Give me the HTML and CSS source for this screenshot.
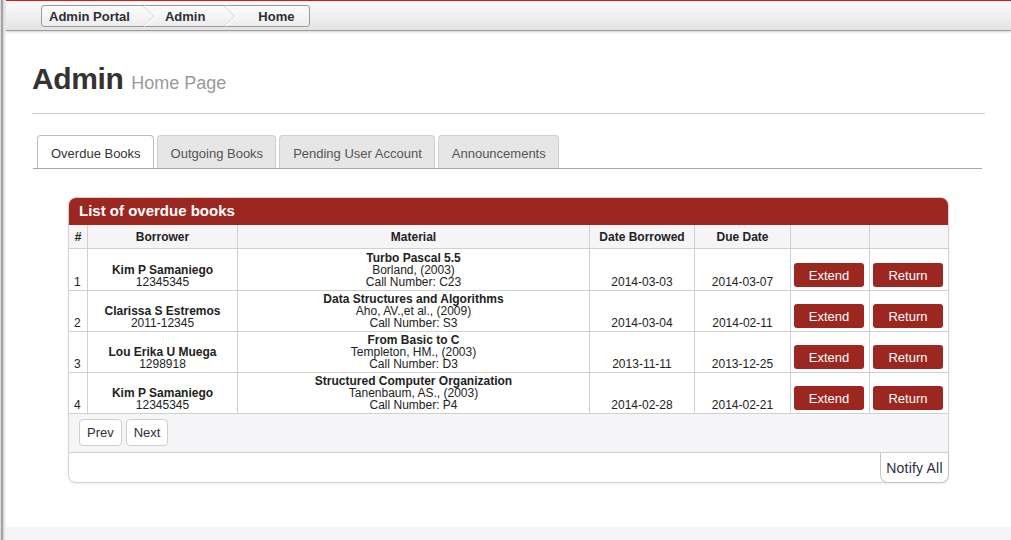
FILE: index.html
```html
<!DOCTYPE html>
<html>
<head>
<meta charset="utf-8">
<title>Admin Home Page</title>
<link rel="stylesheet" href="styles.css">
</head>
<body>
<div class="shell">
  <div class="edge"></div>
  <div class="main">
    <div class="toolbar">
      <nav class="crumbs">
        <span class="crumb c1">Admin Portal</span>
        <svg class="chev" width="14" height="22" viewBox="0 0 14 22"><polyline points="1,1 12,11 1,21" fill="none" stroke="#fdfdfd" stroke-width="2"/><polyline points="0,1 11,11 0,21" fill="none" stroke="#d2d2d2" stroke-width="1"/></svg>
        <span class="crumb c2">Admin</span>
        <svg class="chev" width="14" height="22" viewBox="0 0 14 22"><polyline points="1,1 12,11 1,21" fill="none" stroke="#fdfdfd" stroke-width="2"/><polyline points="0,1 11,11 0,21" fill="none" stroke="#d2d2d2" stroke-width="1"/></svg>
        <span class="crumb c3">Home</span>
      </nav>
    </div>
    <div class="content">
      <div class="page-header">
        <h1>Admin <small>Home Page</small></h1>
      </div>
      <ul class="tabs">
        <li class="tab active">Overdue Books</li>
        <li class="tab">Outgoing Books</li>
        <li class="tab">Pending User Account</li>
        <li class="tab">Announcements</li>
      </ul>
      <div class="panel">
        <div class="panel-head">List of overdue books</div>
        <table class="grid">
          <thead>
            <tr>
              <th class="w-num">#</th>
              <th class="w-bor">Borrower</th>
              <th class="w-mat">Material</th>
              <th class="w-db">Date Borrowed</th>
              <th class="w-due">Due Date</th>
              <th class="w-b1"></th>
              <th class="w-b2"></th>
            </tr>
          </thead>
          <tbody>
            <tr>
              <td class="num">1</td>
              <td class="ctr"><b>Kim P Samaniego</b><br>12345345</td>
              <td class="ctr"><b>Turbo Pascal 5.5</b><br>Borland, (2003)<br>Call Number: C23</td>
              <td class="ctr">2014-03-03</td>
              <td class="ctr">2014-03-07</td>
              <td class="act"><button class="btn-red">Extend</button></td>
              <td class="act"><button class="btn-red">Return</button></td>
            </tr>
            <tr>
              <td class="num">2</td>
              <td class="ctr"><b>Clarissa S Estremos</b><br>2011-12345</td>
              <td class="ctr"><b>Data Structures and Algorithms</b><br>Aho, AV.,et al., (2009)<br>Call Number: S3</td>
              <td class="ctr">2014-03-04</td>
              <td class="ctr">2014-02-11</td>
              <td class="act"><button class="btn-red">Extend</button></td>
              <td class="act"><button class="btn-red">Return</button></td>
            </tr>
            <tr>
              <td class="num">3</td>
              <td class="ctr"><b>Lou Erika U Muega</b><br>1298918</td>
              <td class="ctr"><b>From Basic to C</b><br>Templeton, HM., (2003)<br>Call Number: D3</td>
              <td class="ctr">2013-11-11</td>
              <td class="ctr">2013-12-25</td>
              <td class="act"><button class="btn-red">Extend</button></td>
              <td class="act"><button class="btn-red">Return</button></td>
            </tr>
            <tr>
              <td class="num">4</td>
              <td class="ctr"><b>Kim P Samaniego</b><br>12345345</td>
              <td class="ctr"><b>Structured Computer Organization</b><br>Tanenbaum, AS., (2003)<br>Call Number: P4</td>
              <td class="ctr">2014-02-28</td>
              <td class="ctr">2014-02-21</td>
              <td class="act"><button class="btn-red">Extend</button></td>
              <td class="act"><button class="btn-red">Return</button></td>
            </tr>
          </tbody>
        </table>
        <div class="pager">
          <button class="btn-pg">Prev</button>
          <button class="btn-pg">Next</button>
        </div>
        <div class="notify-row">
          <button class="notify">Notify All</button>
        </div>
      </div>
    </div>
    <div class="footer"></div>
  </div>
</div>
</body>
</html>
```

FILE: styles.css
```css
* { box-sizing: border-box; }
html, body { margin: 0; padding: 0; background: #fff; }
body {
  font-family: "Liberation Sans", Arial, sans-serif;
  color: #333;
  overflow: hidden;
}
.shell {
  display: flex;
  min-height: 540px;
}
.edge {
  flex: 0 0 6px;
  background: linear-gradient(to right, #dcdcdc 0, #dcdcdc 1px, #a3a3a3 1px, #a3a3a3 3px, #d2d2d2 3px, #fafafa 6px);
}
.main {
  flex: 1;
  display: flex;
  flex-direction: column;
  min-width: 0;
}
.toolbar {
  height: 31px;
  border-top: 1px solid #d91a14;
  border-bottom: 1px solid #9c9c9c;
  background: linear-gradient(#fbfbfb, #e4e4e4);
  box-shadow: 0 1px 2px rgba(0,0,0,0.18);
  position: relative;
  z-index: 1;
  padding: 4px 0 0 35px;
}
.crumbs {
  display: inline-flex;
  align-items: center;
  height: 22px;
  width: 269px;
  border: 1px solid #9a9a9a;
  border-radius: 3px;
  background: linear-gradient(#fdfdfd, #ededed);
  font-size: 13px;
  font-weight: bold;
  color: #2e2e36;
  padding-left: 7px;
}
.chev { flex: 0 0 auto; display: block; }
.c1 { margin-right: 13px; }
.c2 { margin-left: 8px; margin-right: 19px; }
.c3 { margin-left: 20px; }
.content {
  padding: 0 26px 0 26px;
}
.page-header {
  margin-top: 31px;
  padding-bottom: 18px;
  border-bottom: 1px solid #cfcfcf;
}
.page-header h1 {
  margin: 0;
  font-size: 30px;
  line-height: 33px;
  font-weight: bold;
  color: #333;
  letter-spacing: -0.4px;
}
.page-header small {
  font-size: 18px;
  line-height: 1;
  font-weight: normal;
  color: #999;
  letter-spacing: 0;
}
.tabs {
  list-style: none;
  margin: 21px 3px 0 1px;
  padding: 0 0 0 4px;
  display: flex;
  gap: 3px;
  border-bottom: 1px solid #a9a9a9;
}
.tab {
  height: 33px;
  line-height: 33px;
  padding: 1px 12px 0 13px;
  font-size: 13px;
  color: #555;
  background: #e6e6e6;
  border: 1px solid #cfcfcf;
  border-bottom: none;
  border-radius: 4px 4px 0 0;
}
.tab.active {
  background: #fff;
  color: #333;
  border-color: #bdbdbd;
}
.panel {
  width: 881px;
  margin: 28px 0 0 36px;
  border: 1px solid #d3d3d3;
  border-radius: 8px;
  background: #fff;
  box-shadow: 0 1px 2px rgba(0,0,0,0.08);
}
.panel-head {
  height: 27px;
  line-height: 26px;
  background: #9b2720;
  color: #fff;
  font-size: 15px;
  font-weight: bold;
  padding-left: 10px;
  border-radius: 7px 7px 0 0;
}
.grid {
  width: 879px;
  table-layout: fixed;
  border-collapse: separate;
  border-spacing: 0;
  font-size: 12px;
  color: #222;
}
.grid th, .grid td {
  border-right: 1px solid #d0d0d0;
  border-bottom: 1px solid #d0d0d0;
  padding: 0;
}
.grid th:last-child, .grid td:last-child { border-right: none; }
.grid th {
  height: 24px;
  background: #f5f5f7;
  font-weight: bold;
  text-align: center;
  vertical-align: middle;
  padding-top: 1px;
}
.w-num { width: 19px; }
.w-bor { width: 150px; }
.w-mat { width: 352px; }
.w-db { width: 105px; }
.w-due { width: 96px; }
.w-b1 { width: 79px; }
.w-b2 { width: 78px; }
.grid td {
  height: 41px;
  line-height: 12px;
  vertical-align: bottom;
  padding: 2px 4px 2px;
}
.grid tbody tr:first-child td { height: 42px; }
.grid td.num { padding-left: 5px; }
.grid td.ctr { text-align: center; }
.grid td.act { padding: 0 0 2px 3px; }
.btn-red {
  display: block;
  width: 70px;
  height: 24px;
  margin-bottom: 1px;
  border: none;
  border-radius: 3px;
  background: #9b2720;
  color: #fff;
  font-family: "Liberation Sans", Arial, sans-serif;
  font-size: 13px;
  padding: 0;
  cursor: pointer;
}
.pager {
  display: flex;
  gap: 4px;
  padding: 5px 10px 6px;
  background: #f5f5f7;
  border-bottom: 1px solid #d0d0d0;
  height: 39px;
}
.btn-pg {
  height: 27px;
  padding: 0 7px;
  background: #fff;
  border: 1px solid #cfcfcf;
  border-radius: 4px;
  font-family: "Liberation Sans", Arial, sans-serif;
  font-size: 13px;
  color: #2e2e40;
}
.notify-row {
  display: flex;
  justify-content: flex-end;
  height: 29px;
}
.notify {
  width: 69px;
  height: 30px;
  margin: 0 -1px -1px 0;
  background: #fff;
  border: 1px solid #c6c6c6;
  border-top: none;
  border-radius: 0 0 8px 8px;
  font-family: "Liberation Sans", Arial, sans-serif;
  font-size: 14px;
  letter-spacing: 0.2px;
  color: #2e2e40;
  padding: 0;
}
.footer {
  margin-top: 44px;
  height: 20px;
  background: #f5f5f7;
}
```
